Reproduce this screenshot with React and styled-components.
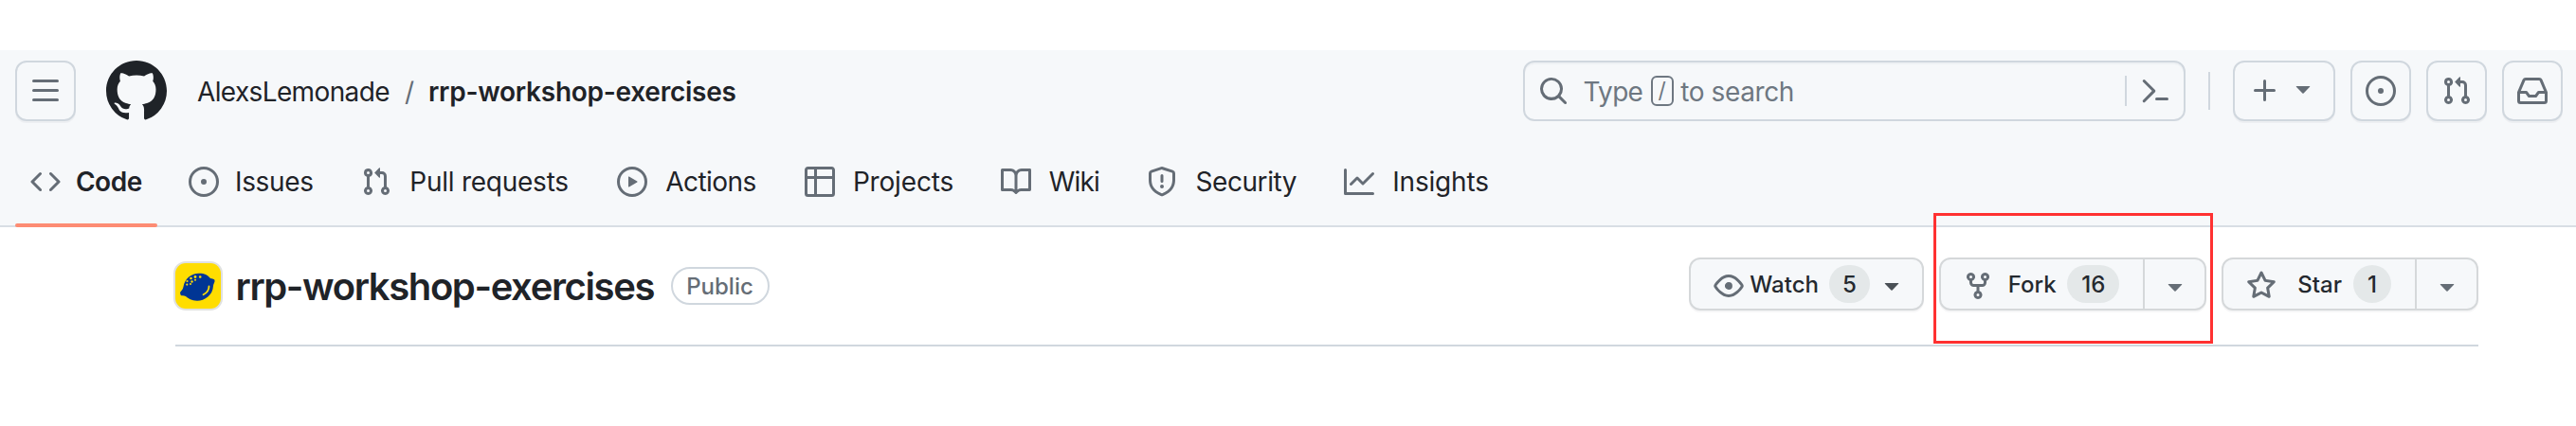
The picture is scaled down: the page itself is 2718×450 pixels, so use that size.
import React from "react";
import styled, { createGlobalStyle, css } from "styled-components";

const GlobalStyle = createGlobalStyle`
  * { box-sizing: border-box; }
  body {
    margin: 0;
    background: #fff;
    color: #1f2328;
    font-family: Inter, "Liberation Sans", sans-serif;
  }
  button { font: inherit; color: inherit; }
`;

const paths = {
  menu: "M1 2.75A.75.75 0 0 1 1.75 2h12.5a.75.75 0 0 1 0 1.5H1.75A.75.75 0 0 1 1 2.75Zm0 5A.75.75 0 0 1 1.75 7h12.5a.75.75 0 0 1 0 1.5H1.75A.75.75 0 0 1 1 7.75ZM1.75 12h12.5a.75.75 0 0 1 0 1.5H1.75a.75.75 0 0 1 0-1.5Z",
  mark: "M8 0c4.42 0 8 3.58 8 8a8.013 8.013 0 0 1-5.45 7.59c-.4.08-.55-.17-.55-.38 0-.27.01-1.13.01-2.2 0-.75-.25-1.23-.54-1.48 1.78-.2 3.65-.88 3.65-3.95 0-.88-.31-1.59-.82-2.15.08-.2.36-1.02-.08-2.12 0 0-.67-.22-2.2.82-.64-.18-1.32-.27-2-.27-.68 0-1.36.09-2 .27-1.53-1.03-2.2-.82-2.2-.82-.44 1.1-.16 1.92-.08 2.12-.51.56-.82 1.28-.82 2.15 0 3.06 1.86 3.75 3.64 3.95-.23.2-.44.55-.51 1.07-.46.21-1.61.55-2.33-.66-.15-.24-.6-.83-1.23-.82-.67.01-.27.38.01.53.34.19.73.9.82 1.13.16.45.68 1.31 2.69.94 0 .67.01 1.3.01 1.49 0 .21-.15.45-.55.38A7.995 7.995 0 0 1 0 8c0-4.42 3.58-8 8-8Z",
  search: "M10.68 11.74a6 6 0 0 1-7.922-8.982 6 6 0 0 1 8.982 7.922l3.04 3.04a.749.749 0 0 1-.326 1.275.749.749 0 0 1-.734-.215ZM11.5 7a4.499 4.499 0 1 0-8.997 0A4.499 4.499 0 0 0 11.5 7Z",
  command: "m6.354 8.04-4.773 4.773a.75.75 0 1 0 1.061 1.06L7.945 8.57a.75.75 0 0 0 0-1.06L2.642 2.206a.75.75 0 0 0-1.06 1.061L6.353 8.04ZM8.75 11.5a.75.75 0 0 0 0 1.5h5.5a.75.75 0 0 0 0-1.5h-5.5Z",
  plus: "M7.75 2a.75.75 0 0 1 .75.75V7h4.25a.75.75 0 0 1 0 1.5H8.5v4.25a.75.75 0 0 1-1.5 0V8.5H2.75a.75.75 0 0 1 0-1.5H7V2.75A.75.75 0 0 1 7.75 2Z",
  caret: "m4.427 7.427 3.396 3.396a.25.25 0 0 0 .354 0l3.396-3.396A.25.25 0 0 0 11.396 7H4.604a.25.25 0 0 0-.177.427Z",
  code: "m11.28 3.22 4.25 4.25a.75.75 0 0 1 0 1.06l-4.25 4.25a.749.749 0 0 1-1.275-.326.749.749 0 0 1 .215-.734L13.94 8l-3.72-3.72a.749.749 0 0 1 .326-1.275.749.749 0 0 1 .734.215Zm-6.56 0a.751.751 0 0 1 1.042.018.751.751 0 0 1 .018 1.042L2.06 8l3.72 3.72a.749.749 0 0 1-.326 1.275.749.749 0 0 1-.734-.215L.47 8.53a.75.75 0 0 1 0-1.06Z",
  issue: "M8 9.5a1.5 1.5 0 1 0 0-3 1.5 1.5 0 0 0 0 3ZM8 0a8 8 0 1 1 0 16A8 8 0 0 1 8 0ZM1.5 8a6.5 6.5 0 1 0 13 0 6.5 6.5 0 0 0-13 0Z",
  pull: "M1.5 3.25a2.25 2.25 0 1 1 3 2.122v5.256a2.251 2.251 0 1 1-1.5 0V5.372A2.25 2.25 0 0 1 1.5 3.25Zm5.677-.177L9.573.677A.25.25 0 0 1 10 .854V2.5h1A2.5 2.5 0 0 1 13.5 5v5.628a2.251 2.251 0 1 1-1.5 0V5a1 1 0 0 0-1-1h-1v1.646a.25.25 0 0 1-.427.177L7.177 3.427a.25.25 0 0 1 0-.354ZM3.75 2.5a.75.75 0 1 0 0 1.5.75.75 0 0 0 0-1.5Zm0 9.5a.75.75 0 1 0 0 1.5.75.75 0 0 0 0-1.5Zm8.25.75a.75.75 0 1 0 1.5 0 .75.75 0 0 0-1.5 0Z",
  play: "M8 0a8 8 0 1 1 0 16A8 8 0 0 1 8 0ZM1.5 8a6.5 6.5 0 1 0 13 0 6.5 6.5 0 0 0-13 0Zm4.879-2.773 4.264 2.559a.25.25 0 0 1 0 .428l-4.264 2.559A.25.25 0 0 1 6 10.559V5.442a.25.25 0 0 1 .379-.215Z",
  table: "M0 1.75C0 .784.784 0 1.75 0h12.5C15.216 0 16 .784 16 1.75v12.5A1.75 1.75 0 0 1 14.25 16H1.75A1.75 1.75 0 0 1 0 14.25ZM6.5 6.5v8h7.75a.25.25 0 0 0 .25-.25V6.5Zm8-1.5V1.75a.25.25 0 0 0-.25-.25H6.5V5Zm-13 1.5v7.75c0 .138.112.25.25.25H5v-8ZM5 5V1.5H1.75a.25.25 0 0 0-.25.25V5Z",
  book: "M0 1.75A.75.75 0 0 1 .75 1h4.253c1.227 0 2.317.59 3 1.501A3.743 3.743 0 0 1 11.006 1h4.245a.75.75 0 0 1 .75.75v10.5a.75.75 0 0 1-.75.75h-4.507a2.25 2.25 0 0 0-1.591.659l-.622.621a.75.75 0 0 1-1.06 0l-.622-.621A2.25 2.25 0 0 0 5.258 13H.75a.75.75 0 0 1-.75-.75Zm7.251 10.324.004-5.073-.002-2.253A2.25 2.25 0 0 0 5.003 2.5H1.5v9h3.757a3.75 3.75 0 0 1 1.994.574ZM8.755 4.75l-.004 7.322a3.752 3.752 0 0 1 1.992-.572H14.5v-9h-3.495a2.25 2.25 0 0 0-2.25 2.25Z",
  shield: "M7.467.133a1.748 1.748 0 0 1 1.066 0l5.25 1.68A1.75 1.75 0 0 1 15 3.48V7c0 1.566-.32 3.182-1.303 4.682-.983 1.498-2.585 2.813-5.032 3.855a1.697 1.697 0 0 1-1.33 0c-2.447-1.042-4.049-2.357-5.032-3.855C1.32 10.182 1 8.566 1 7V3.48a1.75 1.75 0 0 1 1.217-1.667Zm.61 1.429a.25.25 0 0 0-.153 0l-5.25 1.68a.25.25 0 0 0-.174.238V7c0 1.358.275 2.666 1.057 3.86.784 1.194 2.121 2.34 4.366 3.297a.196.196 0 0 0 .154 0c2.245-.956 3.582-2.104 4.366-3.298C13.225 9.666 13.5 8.36 13.5 7V3.48a.251.251 0 0 0-.174-.237l-5.25-1.68ZM8.75 4.75v3a.75.75 0 0 1-1.5 0v-3a.75.75 0 0 1 1.5 0ZM9 10.5a1 1 0 1 1-2 0 1 1 0 0 1 2 0Z",
  graph: "M1.5 1.75V13.5h13.75a.75.75 0 0 1 0 1.5H.75a.75.75 0 0 1-.75-.75V1.75a.75.75 0 0 1 1.5 0Zm14.28 2.53-5.25 5.25a.75.75 0 0 1-1.06 0L7 7.06 4.28 9.78a.751.751 0 0 1-1.042-.018.751.751 0 0 1-.018-1.042l3.25-3.25a.75.75 0 0 1 1.06 0L10 7.94l4.72-4.72a.751.751 0 0 1 1.042.018.751.751 0 0 1 .018 1.042Z",
  inbox: "M2.8 2.06A1.75 1.75 0 0 1 4.41 1h7.18c.7 0 1.333.417 1.61 1.06l2.74 6.395c.04.093.06.194.06.295v4.5A1.75 1.75 0 0 1 14.25 15H1.75A1.75 1.75 0 0 1 0 13.25v-4.5c0-.101.02-.202.06-.295Zm1.61.44a.25.25 0 0 0-.23.152L1.887 8H4.75a.75.75 0 0 1 .6.3L6.625 10h2.75l1.275-1.7a.75.75 0 0 1 .6-.3h2.863L11.82 2.652a.25.25 0 0 0-.23-.152Zm10.09 7h-2.875l-1.275 1.7a.75.75 0 0 1-.6.3h-3.5a.75.75 0 0 1-.6-.3L4.375 9.5H1.5v3.75c0 .138.112.25.25.25h12.5a.25.25 0 0 0 .25-.25Z",
  eye: "M8 2c1.981 0 3.671.992 4.933 2.078 1.27 1.091 2.187 2.345 2.637 3.023a1.62 1.62 0 0 1 0 1.798c-.45.678-1.367 1.932-2.637 3.023C11.67 13.008 9.981 14 8 14c-1.981 0-3.671-.992-4.933-2.078C1.797 10.83.88 9.576.43 8.898a1.62 1.62 0 0 1 0-1.798c.45-.677 1.367-1.931 2.637-3.022C4.33 2.992 6.019 2 8 2ZM1.679 7.932a.12.12 0 0 0 0 .136c.411.622 1.241 1.75 2.366 2.717C5.176 11.758 6.527 12.5 8 12.5c1.473 0 2.825-.742 3.955-1.715 1.124-.967 1.954-2.096 2.366-2.717a.12.12 0 0 0 0-.136c-.412-.621-1.242-1.75-2.366-2.717C10.824 4.242 9.473 3.5 8 3.5c-1.473 0-2.825.742-3.955 1.715-1.124.967-1.954 2.096-2.366 2.717ZM8 10a2 2 0 1 1-.001-3.999A2 2 0 0 1 8 10Z",
  fork: "M5 5.372v.878c0 .414.336.75.75.75h4.5a.75.75 0 0 0 .75-.75v-.878a2.25 2.25 0 1 1 1.5 0v.878a2.25 2.25 0 0 1-2.25 2.25h-1.5v2.128a2.251 2.251 0 1 1-1.5 0V8.5h-1.5A2.25 2.25 0 0 1 3.5 6.25v-.878a2.25 2.25 0 1 1 1.5 0ZM5 3.25a.75.75 0 1 0-1.5 0 .75.75 0 0 0 1.5 0Zm6.75.75a.75.75 0 1 0 0-1.5.75.75 0 0 0 0 1.5Zm-3 8.75a.75.75 0 1 0-1.5 0 .75.75 0 0 0 1.5 0Z",
  star: "M8 .25a.75.75 0 0 1 .673.418l1.882 3.815 4.21.612a.75.75 0 0 1 .416 1.279l-3.046 2.97.719 4.192a.751.751 0 0 1-1.088.791L8 12.347l-3.766 1.98a.75.75 0 0 1-1.088-.79l.72-4.194L.818 6.374a.75.75 0 0 1 .416-1.28l4.21-.611L7.327.668A.75.75 0 0 1 8 .25Zm0 2.445L6.615 5.5a.75.75 0 0 1-.564.41l-3.097.45 2.24 2.184a.75.75 0 0 1 .216.664l-.528 3.084 2.769-1.456a.75.75 0 0 1 .698 0l2.77 1.456-.53-3.084a.75.75 0 0 1 .216-.664l2.24-2.183-3.096-.45a.75.75 0 0 1-.564-.41L8 2.694Z",
};

const IconSvg = styled.svg`
  display: block;
  flex: none;
  width: ${(p) => p.$size}px;
  height: ${(p) => p.$size}px;
  fill: ${(p) => p.$color};
`;

function Icon({ name, size = 32, color = "#656d76" }) {
  return (
    <IconSvg viewBox="0 0 16 16" $size={size} $color={color} aria-hidden="true">
      <path d={paths[name]} />
    </IconSvg>
  );
}

const Page = styled.div`
  width: 2718px;
  height: 450px;
  padding-top: 53px;
  background: #fff;
  white-space: nowrap;
`;

const Header = styled.header`
  height: 187px;
  padding-top: 11px;
  background: #f6f8fa;
  border-bottom: 2px solid #d8dee4;
`;

const TopBar = styled.div`
  display: flex;
  align-items: center;
  height: 64px;
  padding: 0 14px 0 16px;
`;

const HeaderButton = styled.button`
  display: flex;
  align-items: center;
  justify-content: center;
  gap: 8px;
  width: 64px;
  height: 64px;
  padding: 0;
  background: #f6f8fa;
  border: 2px solid #d0d7de;
  border-radius: 12px;
  box-shadow: 0 2px 0 rgba(31, 35, 40, 0.04);
`;

const CreateButton = styled(HeaderButton)`
  justify-content: flex-start;
  width: 108px;
  padding-left: 16px;
`;

const CaretSlot = styled.span`
  padding-bottom: 6px;
`;

const Logo = styled.a`
  margin: 0 32px;
`;

const Breadcrumb = styled.nav`
  display: flex;
  flex: 1;
  align-items: center;
  padding-top: 1px;
  font-size: 28px;
  line-height: 40px;
`;

const Owner = styled.span`
  letter-spacing: -0.63px;
`;

const Slash = styled.span`
  margin: 0 16px;
  color: #656d76;
  letter-spacing: -1px;
`;

const RepoCrumb = styled.span`
  font-weight: 600;
  letter-spacing: -0.26px;
`;

const SearchBox = styled.div`
  display: flex;
  align-items: center;
  width: 699px;
  height: 64px;
  padding-left: 14px;
  padding-right: 14px;
  border: 2px solid #d0d7de;
  border-radius: 12px;
  color: #6e7781;
  font-size: 28px;
  box-shadow: inset 0 2px 0 rgba(208, 215, 222, 0.2);
`;

const SearchHint = styled.span`
  display: flex;
  flex: 1;
  align-items: center;
  margin-left: 15.5px;
`;

const SearchWord = styled.span`
  padding-top: 1px;
  letter-spacing: -0.7px;
`;

const SearchTail = styled.span`
  padding-top: 1px;
  letter-spacing: -0.4px;
`;

const Key = styled.kbd`
  display: flex;
  align-items: center;
  justify-content: center;
  width: 24px;
  height: 32px;
  margin: 0 7.5px 0 8.5px;
  border: 2px solid #6e7781;
  border-radius: 6px;
  font: 400 23px Inter, sans-serif;
  line-height: 28px;
`;

const Divider = styled.span`
  width: 2px;
  height: ${(p) => p.$height}px;
  background: #d0d7de;
`;

const HeaderActions = styled.div`
  display: flex;
  align-items: center;
  gap: 16px;
  margin-left: 24px;
`;

const SearchDivider = styled(Divider)`
  margin-right: 14px;
`;

const BarDivider = styled(Divider)`
  margin-left: 24px;
`;

const Tabs = styled.nav`
  display: flex;
  align-items: stretch;
  gap: 16px;
  height: 92px;
  margin-top: 18px;
  padding-left: 16px;
`;

const Tab = styled.a`
  position: relative;
  display: flex;
  align-items: center;
  gap: ${(p) => p.$gap}px;
  width: ${(p) => p.$width}px;
  padding-left: 16px;
  font-size: 28px;
  letter-spacing: ${(p) => p.$spacing}px;
  ${(p) =>
    p.$active &&
    css`
      font-weight: 600;
      &::after {
        content: "";
        position: absolute;
        left: 0;
        bottom: -2px;
        width: 150px;
        height: 4px;
        border-radius: 2px;
        background: #fd8c73;
      }
    `}
`;

const RepoHead = styled.section`
  display: flex;
  align-items: center;
  height: 126px;
  margin: 0 103px 0 185px;
  border-bottom: 2px solid #d0d7de;
`;

const Avatar = styled.svg`
  flex: none;
  width: 52px;
  height: 52px;
  margin-left: -2px;
`;

const RepoTitle = styled.h1`
  width: 459px;
  margin: 0 0 0 13.5px;
  padding-top: 2px;
  font-size: 40px;
  font-weight: 600;
  line-height: 48px;
  letter-spacing: -1.38px;
`;

const Visibility = styled.span`
  display: flex;
  align-items: center;
  justify-content: center;
  width: 104px;
  height: 40px;
  border: 2px solid #d0d7de;
  border-radius: 20px;
  color: #656d76;
  font-size: 24px;
  font-weight: 500;
`;

const RepoActions = styled.div`
  display: flex;
  gap: 16px;
  margin: 0 0 4px auto;
`;

const ButtonGroup = styled.div`
  display: flex;
  height: 56px;
  width: ${(p) => p.$width}px;
  background: #f6f8fa;
  border: 2px solid #d5d8da;
  border-radius: 12px;
  box-shadow: 0 2px 0 rgba(31, 35, 40, 0.04);
`;

const MainAction = styled.button`
  display: flex;
  flex: 1;
  align-items: center;
  padding: 0 0 0 ${(p) => p.$inset}px;
  background: none;
  border: 0;
  color: #24292f;
  font-size: 24px;
  font-weight: 500;
`;

const ActionIcon = styled.span`
  padding-top: 4px;
`;

const ActionLabel = styled.span`
  width: ${(p) => p.$width}px;
  margin-left: ${(p) => p.$gap}px;
  padding-top: 1px;
  text-align: left;
`;

const Counter = styled.span`
  display: flex;
  align-items: center;
  justify-content: center;
  width: ${(p) => p.$width}px;
  height: 40px;
  padding-top: 1px;
  border-radius: 20px;
  background: #e4e8e9;
`;

const InlineCaret = styled.span`
  margin-left: 7px;
  padding-top: 2px;
`;

const MenuAction = styled.button`
  display: flex;
  align-items: center;
  justify-content: center;
  width: 65px;
  padding: 4px 0 0;
  background: none;
  border: 0;
  border-left: 2px solid #d5d8da;
`;

const Highlight = styled.div`
  position: absolute;
  left: 2040px;
  top: 225px;
  width: 295px;
  height: 138px;
  border: 3px solid #ff3131;
  pointer-events: none;
`;

const tabs = [
  { icon: "code", label: "Code", width: 151, gap: 15.9, spacing: -0.4, active: true },
  { icon: "issue", label: "Issues", width: 165.5, gap: 17, spacing: -0.35 },
  { icon: "pull", label: "Pull requests", width: 254.8, gap: 19.8, spacing: -0.25 },
  { icon: "play", label: "Actions", width: 181.7, gap: 19, spacing: -0.55 },
  { icon: "table", label: "Projects", width: 191, gap: 18.9, spacing: -0.17 },
  { icon: "book", label: "Wiki", width: 138, gap: 18.8, spacing: -0.8 },
  { icon: "shield", label: "Security", width: 192.5, gap: 19.6, spacing: -0.45 },
  { icon: "graph", label: "Insights", width: 170, gap: 18.7, spacing: -0.17 },
];

function LemonAvatar() {
  return (
    <Avatar viewBox="0 0 52 52" aria-hidden="true">
      <rect width="52" height="52" rx="13" fill="#e0e1e0" />
      <rect x="2" y="2" width="48" height="48" rx="11" fill="#ffdd00" />
      <path
        fill="#003594"
        d="M7 33C8 31 10 30 10.500 27C12 18 19 12.700 27 12.700C33 12.700 36 14.500 38.500 17.500C40 18.800 42.500 18 43.500 20C44 22 42 24 42 26C41.500 36 33 41.700 25 41.700C19 41.700 16 39.500 13 37C11 36 8.500 37 7.500 35.500Z"
      />
      <g fill="#ffdd00">
        <circle cx="18.500" cy="18" r="1.300" />
        <circle cx="23" cy="16.500" r="1.400" />
        <circle cx="28.200" cy="16.500" r="1.300" />
        <circle cx="14.500" cy="21" r="1.100" />
        <circle cx="19.500" cy="21.500" r="1.200" />
        <circle cx="23" cy="19.800" r="1" />
        <circle cx="14.300" cy="24.600" r="1.100" />
        <circle cx="18" cy="24" r="1" />
      </g>
      <path d="M37.500 26.500C37.500 31 35 33.500 31.500 35.200" fill="none" stroke="#ffdd00" strokeWidth="1.800" strokeLinecap="round" />
    </Avatar>
  );
}

export default function App() {
  return (
    <Page>
      <GlobalStyle />
      <Header>
        <TopBar>
          <HeaderButton aria-label="Open menu">
            <Icon name="menu" />
          </HeaderButton>
          <Logo>
            <Icon name="mark" size={64} color="#1f2328" />
          </Logo>
          <Breadcrumb>
            <Owner>AlexsLemonade</Owner>
            <Slash>/</Slash>
            <RepoCrumb>rrp-workshop-exercises</RepoCrumb>
          </Breadcrumb>
          <SearchBox>
            <Icon name="search" />
            <SearchHint>
              <SearchWord>Type</SearchWord>
              <Key>/</Key>
              <SearchTail>to search</SearchTail>
            </SearchHint>
            <SearchDivider $height={32} />
            <Icon name="command" />
          </SearchBox>
          <BarDivider $height={40} />
          <HeaderActions>
            <CreateButton aria-label="Create new">
              <Icon name="plus" />
              <CaretSlot>
                <Icon name="caret" />
              </CaretSlot>
            </CreateButton>
            <HeaderButton aria-label="Issues">
              <Icon name="issue" />
            </HeaderButton>
            <HeaderButton aria-label="Pull requests">
              <Icon name="pull" />
            </HeaderButton>
            <HeaderButton aria-label="Notifications">
              <Icon name="inbox" />
            </HeaderButton>
          </HeaderActions>
        </TopBar>
        <Tabs>
          {tabs.map((t) => (
            <Tab key={t.label} $width={t.width} $gap={t.gap} $spacing={t.spacing} $active={t.active}>
              <Icon name={t.icon} />
              {t.label}
            </Tab>
          ))}
        </Tabs>
      </Header>

      <RepoHead>
        <LemonAvatar />
        <RepoTitle>rrp-workshop-exercises</RepoTitle>
        <Visibility>Public</Visibility>
        <RepoActions>
          <ButtonGroup $width={247.5}>
            <MainAction $inset={23.5}>
              <ActionIcon>
                <Icon name="eye" />
              </ActionIcon>
              <ActionLabel $gap={6.5} $width={83.5}>Watch</ActionLabel>
              <Counter $width={43}>5</Counter>
              <InlineCaret>
                <Icon name="caret" color="#4a5056" />
              </InlineCaret>
            </MainAction>
          </ButtonGroup>
          <ButtonGroup $width={282.5}>
            <MainAction $inset={23.3}>
              <ActionIcon>
                <Icon name="fork" />
              </ActionIcon>
              <ActionLabel $gap={15.7} $width={62.5}>Fork</ActionLabel>
              <Counter $width={55}>16</Counter>
            </MainAction>
            <MenuAction aria-label="Fork options">
              <Icon name="caret" />
            </MenuAction>
          </ButtonGroup>
          <ButtonGroup $width={270.7}>
            <MainAction $inset={24}>
              <ActionIcon>
                <Icon name="star" />
              </ActionIcon>
              <ActionLabel $gap={22} $width={58.7}>Star</ActionLabel>
              <Counter $width={40}>1</Counter>
            </MainAction>
            <MenuAction aria-label="Star options">
              <Icon name="caret" />
            </MenuAction>
          </ButtonGroup>
        </RepoActions>
      </RepoHead>
      <Highlight />
    </Page>
  );
}
